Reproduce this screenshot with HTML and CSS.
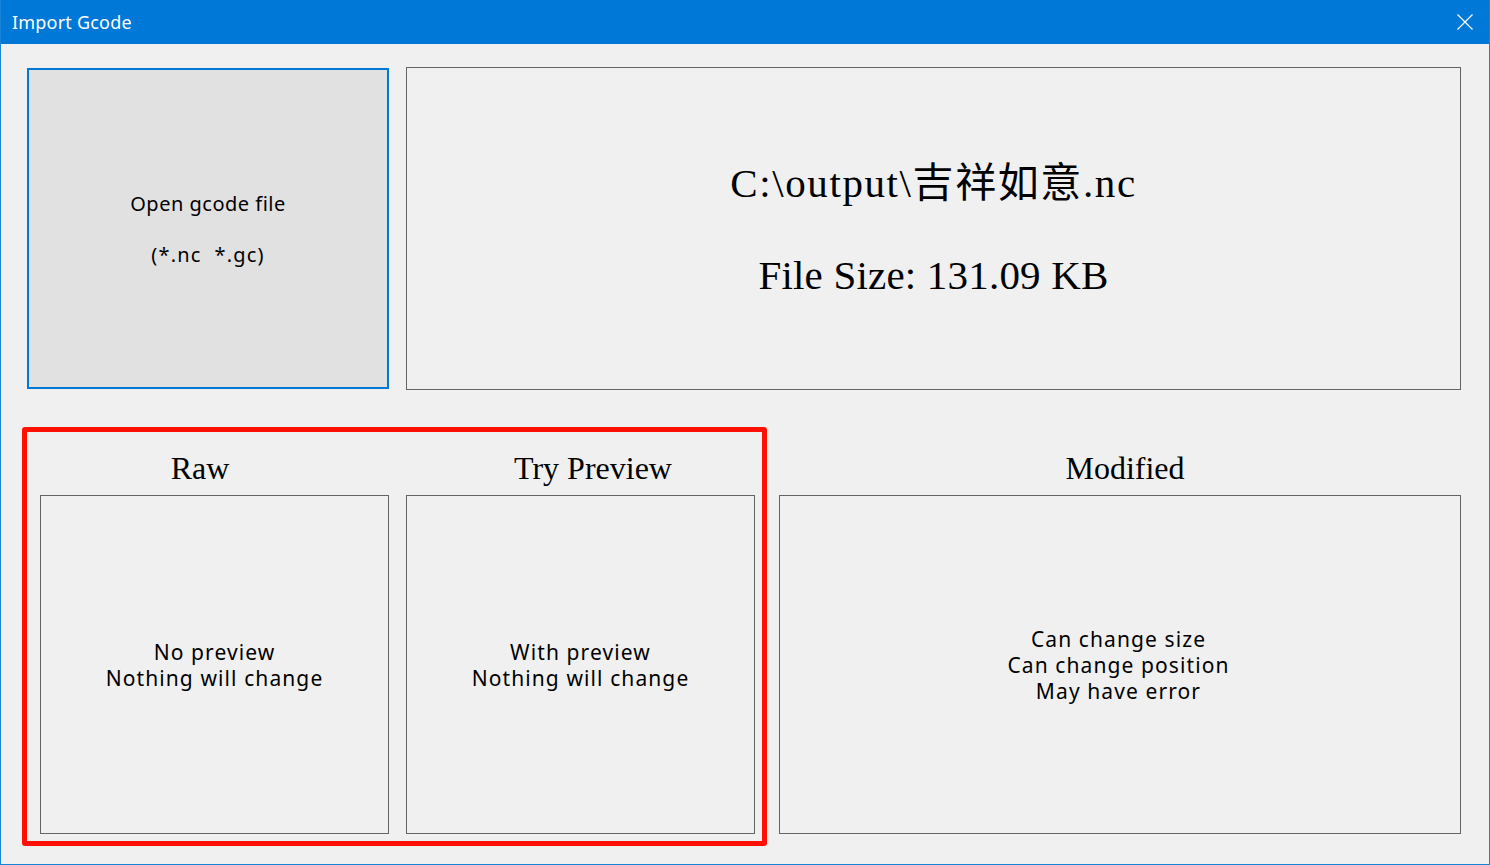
FILE: index.html
```html
<!DOCTYPE html>
<html lang="en">
  <head>
    <meta charset="UTF-8" />
    <meta name="viewport" content="width=device-width, initial-scale=1.0" />
    <title>Import Gcode</title>
    <link rel="stylesheet" href="styles.css">
  </head>
  <body>
    <div class="window">
      <!-- title bar -->
      <div class="titlebar">
        <span class="title">Import Gcode</span>
        <div class="close">
          <svg width="16" height="16" viewBox="0 0 16 16">
            <path d="M0.5 0.5 L15.5 15.5 M15.5 0.5 L0.5 15.5" stroke="#fff" stroke-width="1.2" fill="none" />
          </svg>
        </div>
      </div>

      <div class="content">
        <div class="top-row">
          <div class="open-button">
            <div>Open gcode file</div>
            <div class="ext">(*.nc&nbsp;&nbsp;*.gc)</div>
          </div>
          <div class="file-info">
            <div class="file-name">C:\output\吉祥如意.nc</div>
            <div class="file-size">File Size: 131.09 KB</div>
          </div>
        </div>

        <div class="bottom-row">
          <div class="highlight">
            <div class="mode">
              <div class="mode-label raw">Raw</div>
              <div class="mode-box">
                <div>No preview</div>
                <div>Nothing will change</div>
              </div>
            </div>
            <div class="mode">
              <div class="mode-label try">Try Preview</div>
              <div class="mode-box">
                <div>With preview</div>
                <div>Nothing will change</div>
              </div>
            </div>
          </div>

          <div class="mode modified">
            <div class="mode-label mod">Modified</div>
            <div class="mode-box">
              <div>Can change size</div>
              <div>Can change position</div>
              <div>May have error</div>
            </div>
          </div>
        </div>
      </div>
    </div>
  </body>
</html>
```

FILE: styles.css
```css
body {
  margin: 0;
  padding: 0;
  background: #f0f0f0;
  font-family: "Noto Sans", Arial, sans-serif;
}

.window {
  width: 1490px;
  height: 865px;
  box-sizing: border-box;
  border: 1px solid #1883d7;
  border-top: none;
  background: #f0f0f0;
  overflow: hidden;
}

.titlebar {
  height: 44px;
  background: #0078d7;
  color: #fff;
  display: flex;
  align-items: center;
  justify-content: space-between;
  padding: 0 17px 0 12px;
  margin: 0 -1px;
}

.title {
  font-size: 18px;
  letter-spacing: 0.2px;
  margin-top: -1px;
}

.close {
  display: flex;
}

.content {
  padding-top: 23px;
}

.top-row {
  display: flex;
  align-items: flex-start;
  margin-left: 26px;
  gap: 17px;
}

.open-button {
  width: 362px;
  height: 321px;
  margin-top: 1px;
  box-sizing: border-box;
  border: 2px solid #0078d7;
  background: #e1e1e1;
  display: flex;
  flex-direction: column;
  align-items: center;
  justify-content: center;
  gap: 25px;
  font-size: 20px;
  letter-spacing: 0.5px;
  line-height: 26px;
  color: #000;
  padding-top: 2px;
}

.open-button .ext {
  letter-spacing: 1.2px;
}

.file-info {
  width: 1055px;
  height: 323px;
  box-sizing: border-box;
  border: 1px solid #646464;
  display: flex;
  flex-direction: column;
  align-items: center;
  justify-content: center;
  gap: 42px;
  font-family: "Liberation Serif", "Noto Sans CJK SC", serif;
  font-size: 41px;
  line-height: 50px;
}

.file-name {
  letter-spacing: 1.6px;
}

.file-size {
  letter-spacing: 0.2px;
}

.bottom-row {
  display: flex;
  align-items: flex-start;
  margin-top: 37px;
  margin-left: 21px;
}

/* red annotation frame around the first two modes */
.highlight {
  width: 745px;
  height: 419px;
  box-sizing: border-box;
  border: 5px solid #ff1000;
  border-radius: 3px;
  padding: 0 7px 7px 13px;
  display: flex;
  gap: 17px;
}

.mode {
  display: flex;
  flex-direction: column;
}

.modified {
  margin-left: 12px;
  margin-top: 5px;
}

.mode-label {
  height: 63px;
  box-sizing: border-box;
  padding-top: 18px;
  line-height: 36px;
  text-align: center;
  font-family: "Liberation Serif", serif;
  font-size: 32px;
  color: #000;
}

.raw {
  padding-right: 29px;
}

.try {
  padding-left: 25px;
}

.mod {
  padding-left: 10px;
}

.mode-box {
  width: 349px;
  height: 339px;
  box-sizing: border-box;
  border: 1px solid #646464;
  display: flex;
  flex-direction: column;
  align-items: center;
  justify-content: center;
  font-size: 21px;
  letter-spacing: 1.1px;
  line-height: 26px;
  color: #000;
}

.modified .mode-box {
  width: 682px;
  padding-right: 3px;
}
```
